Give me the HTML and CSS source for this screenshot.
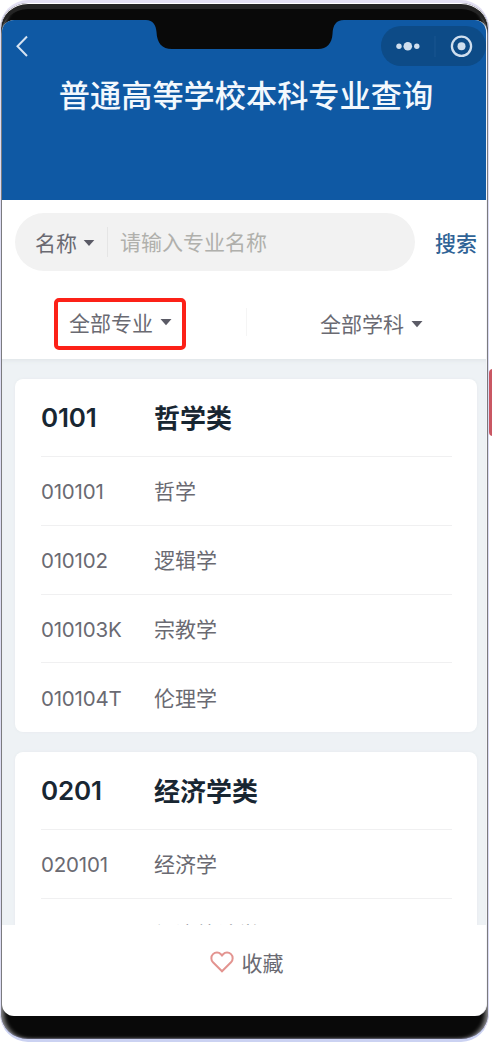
FILE: index.html
```html
<!DOCTYPE html>
<html lang="zh-CN">
<head>
<meta charset="utf-8">
<title>普通高等学校本科专业查询</title>
<link rel="stylesheet" href="styles.css">
</head>
<body>
<div class="side-button"></div>
<div class="phone">
  <div class="screen">
    <header class="hero">
      <svg class="notch" width="198" height="30" viewBox="0 0 198 30"><path d="M0 0C7 0 10 5 10.5 12C11 23 16 29 26 29H172C181 29 186 23 186.5 14C187 5 190 0 198 0Z" fill="#090909"/></svg>
      <div class="nav">
        <svg class="back" width="14" height="24" viewBox="0 0 14 24"><path d="M13 2.5L3.5 12.3L13 22" fill="none" stroke="#d5e2f1" stroke-width="2"/></svg>
        <div class="capsule">
          <svg width="105" height="39" viewBox="0 0 105 39"><g fill="#cfdeee"><circle cx="18" cy="20.3" r="2.7"/><circle cx="26.8" cy="20.3" r="4.3"/><circle cx="35.8" cy="20.3" r="2.7"/><circle cx="80.5" cy="20.3" r="4"/></g><path d="M54 10V31" stroke="#1b5690"/><circle cx="80.5" cy="20.3" r="9.6" fill="none" stroke="#cfdeee" stroke-width="2.3"/></svg>
        </div>
      </div>
      <h1 class="title">普通高等学校本科专业查询</h1>
    </header>
    <section class="controls">
      <div class="search">
        <div class="search-box">
          <span class="field">名称</span><svg class="caret" width="12" height="8" viewBox="0 0 12 8"><path d="M.7 1H11.3L6 7Z"/></svg>
          <span class="placeholder">请输入专业名称</span>
        </div>
        <span class="search-action">搜索</span>
      </div>
      <div class="filters">
        <div class="filter"><span class="chip marked"><span>全部专业</span><svg class="caret" width="12" height="8" viewBox="0 0 12 8"><path d="M.5 1H11.5L6 7.2Z"/></svg></span></div>
        <div class="filter"><span class="chip"><span>全部学科</span><svg class="caret" width="12" height="8" viewBox="0 0 12 8"><path d="M.5 1H11.5L6 7.2Z"/></svg></span></div>
      </div>
    </section>
    <main class="list">
      <section class="card">
        <div class="row head"><span class="code">0101</span><span class="name">哲学类</span></div>
        <div class="row"><span class="code">010101</span><span class="name">哲学</span></div>
        <div class="row"><span class="code">010102</span><span class="name">逻辑学</span></div>
        <div class="row"><span class="code">010103K</span><span class="name">宗教学</span></div>
        <div class="row"><span class="code">010104T</span><span class="name">伦理学</span></div>
      </section>
      <section class="card">
        <div class="row head"><span class="code">0201</span><span class="name">经济学类</span></div>
        <div class="row"><span class="code">020101</span><span class="name">经济学</span></div>
        <div class="row"><span class="code"></span><span class="name">经济统计学</span></div>
      </section>
    </main>
    <footer class="footer">
      <svg width="24" height="22" viewBox="0 0 24 22"><path d="M12 20.3L3 11.3C.8 9 .8 5.2 3 3.1C5.3.9 8.8 1 10.9 3.2L12 4.4L13.1 3.2C15.2 1 18.7.9 21 3.1C23.2 5.2 23.2 9 21 11.3Z" fill="none" stroke="#e39490" stroke-width="2"/></svg>
      <span>收藏</span>
    </footer>
  </div>
</div>
</body>
</html>
```
FILE: styles.css
```css
* { box-sizing: border-box; }
body {
  margin: 0;
  height: 1042px;
  overflow: hidden;
  position: relative;
  background: #fff;
  font-family: "Noto Sans CJK SC", sans-serif;
  color: #6a6a72;
}
.phone {
  width: 489px;
  height: 1042px;
  padding: 17px 1px 23px;
  border: 1px solid #dcdcf3;
  border-top: 3px solid #e3e0f3;
  border-bottom: 3px solid #cbd2f2;
  border-radius: 28px;
  background: #090909;
  box-shadow: inset 0 1px #fff, inset 0 6px #242424, inset 4px 0 4px -1px #888, inset -4px 0 4px -1px #888, inset 0 0 0 1px #22223a;
}
.side-button {
  position: absolute;
  left: 489px;
  top: 369px;
  width: 8px;
  height: 67px;
  border-radius: 4px;
  background: #c95763;
}
.screen {
  height: 996px;
  width: 485px;
  border-radius: 12px;
  border-right: 1px solid #f4f4f8;
  overflow: hidden;
  display: flex;
  flex-direction: column;
  background: #fff;
}
.hero {
  height: 180px;
  flex: none;
  position: relative;
  background: #0f59a4;
}
.notch { position: absolute; left: 144px; top: 0; }
.nav {
  height: 53px;
  padding: 6px 0 0 12px;
  display: flex;
  justify-content: space-between;
}
.back { margin-top: 8px; }
.capsule {
  width: 105px;
  height: 40px;
  border-radius: 20px;
  background: #0d4b87;
}
.title {
  margin: -2px 0 0;
  padding-left: 4px;
  color: #f3f8fd;
  font-size: 31.2px;
  line-height: 46px;
  font-weight: 500;
  text-align: center;
  white-space: nowrap;
}
.controls {
  height: 159px;
  flex: none;
  padding-top: 13px;
  font-size: 21px;
}
.search {
  display: flex;
  align-items: center;
  padding: 0 9px 0 13px;
  justify-content: space-between;
}
.search-box {
  width: 400px;
  height: 58px;
  border-radius: 29px;
  padding-left: 20px;
  display: flex;
  align-items: center;
  background: #f2f2f2;
}
.caret { fill: #5b5b66; flex: none; }
.search-box .caret { margin: 2px 12px 0 6px; }
.placeholder {
  height: 30px;
  line-height: 29px;
  padding-left: 12px;
  border-left: 1px solid #e5e5e5;
  color: #b0b0ac;
}
.search-action { color: #2f6396; font-weight: 500; }
.filters { display: flex; height: 86px; padding-top: 27px; }
.filter { flex: 1; }
.filter + .filter { height: 28px; margin-top: 10px; border-left: 1px solid #f5f5f5; }
.chip {
  display: inline-flex;
  align-items: center;
  gap: 7px;
  height: 52px;
  border: 4px solid transparent;
}
.chip span { padding-bottom: 5px; }
.chip .caret { margin-bottom: 4px; }
.filter:first-child { flex: none; width: 244px; }
.filter:first-child .chip { margin-left: 52px; padding-left: 11px; width: 132px; }
.filter:last-child .chip { margin: -11px 0 0 69px; }
.chip.marked { border-color: #fc2118; border-radius: 5px; }
.list {
  height: 566px;
  flex: none;
  overflow: hidden;
  padding: 20px 9px 0 13px;
  background: #eef2f5;
  box-shadow: inset 0 4px 5px -3px #dde2e6;
}
.card {
  margin-bottom: 20px;
  padding: 0 25px 0 26px;
  border-radius: 8px;
  background: #fff;
  box-shadow: 0 0 3px #e5e9ed;
}
.row {
  height: 68.75px;
  display: grid;
  grid-template-columns: 113px 1fr;
  align-items: center;
  border-bottom: 1px solid #f0f0f1;
  font-size: 21px;
}
.row:last-child { border-bottom: 0; }
.code { padding-top: 2px; font-family: Inter, sans-serif; font-size: 20.5px; letter-spacing: -.2px; }
.name { padding-bottom: 1px; }
.head { height: 78px; color: #182632; font-size: 26px; font-weight: 700; }
.head .code { padding-top: 0; font-size: 26px; font-weight: 600; }
.head .name { padding-bottom: 2px; }
.footer {
  flex: 1;
  padding: 21px 0 0 5px;
  display: flex;
  justify-content: center;
  align-items: flex-start;
  gap: 8px;
  font-size: 21px;
  line-height: 32px;
}
.footer svg { margin-top: 5px; }
```
